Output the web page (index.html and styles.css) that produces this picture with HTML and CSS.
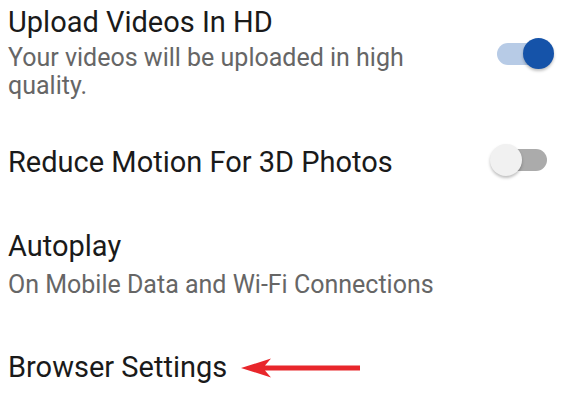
FILE: index.html
```html
<!DOCTYPE html>
<html lang="en">
<head>
    <meta charset="UTF-8">
    <title>Settings</title>
    <link rel="stylesheet" href="styles.css">
</head>
<body>

    <!-- Settings list -->
    <div class="settings">
        <div class="row row-hd">
            <div class="text">
                <div class="title">Upload Videos In HD</div>
                <div class="sub">Your videos will be uploaded in high quality.</div>
            </div>
            <div class="switch on"><span class="knob"></span></div>
        </div>

        <div class="row row-motion">
            <div class="text">
                <div class="title">Reduce Motion For 3D Photos</div>
            </div>
            <div class="switch"><span class="knob"></span></div>
        </div>

        <div class="row row-autoplay">
            <div class="text">
                <div class="title">Autoplay</div>
                <div class="sub">On Mobile Data and Wi-Fi Connections</div>
            </div>
        </div>

        <div class="row row-browser">
            <div class="title">Browser Settings</div>
            <svg class="arrow" width="120" height="22" viewBox="0 0 120 22">
                <path d="M0 11 L30 1.5 L24 8.5 L119 8.5 L119 13.5 L24 13.5 L30 20.5 Z" fill="#e8262b"/>
            </svg>
        </div>
    </div>

</body>
</html>
```

FILE: styles.css
```css
/* Reset */
body, html {
    margin: 0;
    padding: 0;
    background: #ffffff;
    font-family: 'Roboto', sans-serif;
    overflow: hidden;
}

/* List */
.settings {
    padding: 5px 9px 0 8px;
}

.row {
    display: flex;
    align-items: center;
    justify-content: space-between;
}

.text {
    width: 440px;
}

.title {
    font-size: 29px;
    line-height: 34px;
    color: #1a1a1a;
}

.sub {
    font-size: 25px;
    line-height: 28px;
    color: #666666;
    margin-top: 5px;
}

.row-hd {
    align-items: flex-start;
}

.row-hd .switch {
    margin-top: 38px;
}

.row-motion {
    margin-top: 45px;
}

.row-motion .switch {
    margin-bottom: 4px;
}

.row-autoplay {
    margin-top: 50px;
}

.row-autoplay .sub {
    margin-top: 8px;
}

.row-browser {
    justify-content: flex-start;
    margin-top: 51px;
}

/* Arrow */
.arrow {
    margin-left: 14px;
    margin-top: 1px;
}

/* Toggle switch */
.switch {
    position: relative;
    width: 44px;
    height: 22px;
    border-radius: 11px;
    background: #ababab;
    margin-right: 6px;
}

.switch .knob {
    position: absolute;
    top: -5px;
    left: -13px;
    width: 32px;
    height: 32px;
    border-radius: 50%;
    background: #f1f1f1;
    box-shadow: 0 2px 3px rgba(0, 0, 0, 0.25);
}

.switch.on {
    width: 43px;
    background: #b7cbe6;
    margin-right: 13px;
}

.switch.on .knob {
    left: 26px;
    top: -5px;
    width: 31px;
    height: 31px;
    background: #1553a9;
}
```
